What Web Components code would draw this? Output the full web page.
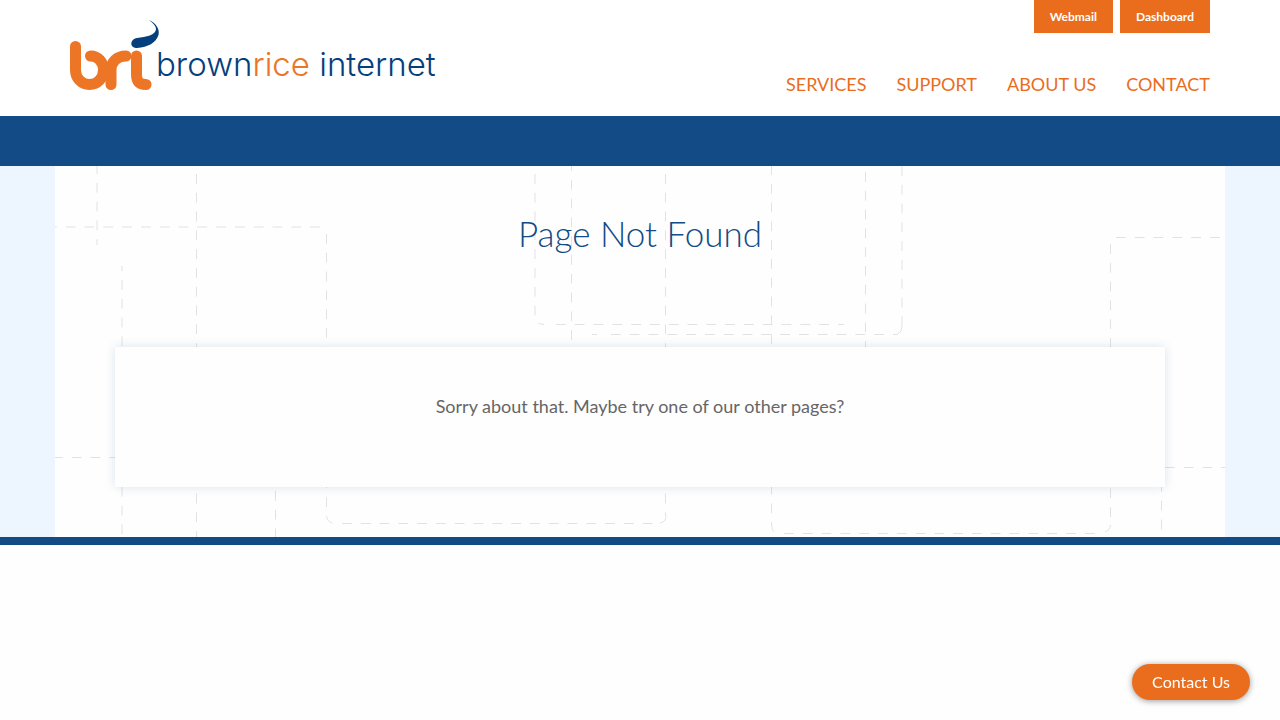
<!DOCTYPE html>
<html lang="en">
<head>
<meta charset="utf-8">
<meta name="viewport" content="width=device-width, initial-scale=1">
<title>Page Not Found - Brownrice Internet</title>
<style>
  :root {
    --orange: #ea6d1e;
    --blue: #124b85;
    --pale: #edf5fe;
    --container: 1170px;
    --gutter: 15px;
  }
  body {
    margin: 0;
    background: #fefefe;
    color: #666;
    font: 18px/26px Lato, "Liberation Sans", sans-serif;
  }
</style>
</head>
<body>
<br-header>
  <br-logo slot="logo"></br-logo>
  <br-tab slot="tabs" href="#webmail">Webmail</br-tab>
  <br-tab slot="tabs" href="#dashboard">Dashboard</br-tab>
  <br-nav-link slot="nav" href="#services">Services</br-nav-link>
  <br-nav-link slot="nav" href="#support">Support</br-nav-link>
  <br-nav-link slot="nav" href="#about">About Us</br-nav-link>
  <br-nav-link slot="nav" href="#contact">Contact</br-nav-link>
</br-header>
<br-banner></br-banner>
<br-page heading="Page Not Found">
  <br-card>Sorry about that. Maybe try one of our other pages?</br-card>
</br-page>
<br-chat-button>Contact Us</br-chat-button>

<script>
  class Base extends HTMLElement {
    constructor() {
      super();
      this.attachShadow({ mode: 'open' });
    }
    connectedCallback() {
      this.shadowRoot.innerHTML = this.render();
    }
  }

  customElements.define('br-logo', class extends Base {
    render() {
      return `
        <style>
          :host { display: block; }
          a, svg { display: block; }
          text { font: 300 33px Inter, "Liberation Sans", sans-serif; fill: #053f7c; }
          .accent { fill: #ec7526; }
        </style>
        <a href="#home" aria-label="Brownrice Internet">
          <svg width="372" height="70" viewBox="0 0 372 70">
            <g fill="none" stroke="#ec7526" stroke-width="11" stroke-linecap="round" stroke-linejoin="round">
              <path d="M5.5 26.500V50C5.500 58 11.500 64.500 19.500 64.500C27.500 64.500 33.500 58 33.500 50C33.500 42 28 36 20.500 36"/>
              <path d="M41 64.500V50C41 42 47 36 56 36"/>
              <path d="M66.500 36V54C66.500 61 69 64.500 76 64.500"/>
            </g>
            <path fill="#053f7c" d="M79 0C86 3 90 9 88.500 15C86 23 78 27 67 28C59 28 60 19 67 18C76 17 86 15 86 9C86 6 83 3 79 0Z"/>
            <text x="86" y="56">brown<tspan class="accent">rice</tspan> internet</text>
          </svg>
        </a>`;
    }
  });

  customElements.define('br-tab', class extends Base {
    render() {
      return `
        <style>
          :host { display: block; }
          a {
            display: block; padding: 0 16px; background: var(--orange); color: #fff;
            font-size: 12px; font-weight: 700; line-height: 33px; text-decoration: none;
          }
        </style>
        <a href="${this.getAttribute('href')}"><slot></slot></a>`;
    }
  });

  customElements.define('br-nav-link', class extends Base {
    render() {
      return `
        <style>
          :host { display: block; }
          a {
            display: block; color: var(--orange); font-size: 18px; line-height: 26px;
            text-decoration: none; text-transform: uppercase;
          }
        </style>
        <a href="${this.getAttribute('href')}"><slot></slot></a>`;
    }
  });

  customElements.define('br-header', class extends Base {
    render() {
      return `
        <style>
          :host { display: block; background: #fff; }
          header {
            display: flex; justify-content: space-between; box-sizing: border-box;
            max-width: var(--container); margin: 0 auto; padding: 0 var(--gutter);
          }
          .logo { padding: 20px 0 26px; }
          .side { display: flex; flex-direction: column; justify-content: space-between; align-items: flex-end; padding-bottom: 19px; }
          .tabs { display: flex; gap: 7px; }
          nav { display: flex; gap: 30px; }
        </style>
        <header>
          <div class="logo"><slot name="logo"></slot></div>
          <div class="side">
            <div class="tabs"><slot name="tabs"></slot></div>
            <nav aria-label="Main"><slot name="nav"></slot></nav>
          </div>
        </header>`;
    }
  });

  customElements.define('br-banner', class extends Base {
    render() {
      return `<style>:host { display: block; height: 50px; background: var(--blue); }</style>`;
    }
  });

  /* Dashed circuit lines behind the page content. */
  customElements.define('br-circuit', class extends Base {
    render() {
      const lines = [
        'M42 -2V79',
        'M141.500 8V371',
        'M67 100V105M67 114V371',
        'M-8 61H266',
        'M271.500 68V348Q271.500 357 280 357.500',
        'M287 357.500H600M605 357Q611 356 611 350',
        'M610.500 8V350',
        'M480 8V151Q480 158 489 158.500',
        'M501 158.500H789',
        'M516.500 -5V176',
        'M716.500 -1V357Q716.500 365 720 366',
        'M729 367.500H1044M1050 366Q1055 364 1055.500 359',
        'M810.500 6V182',
        'M847 0V160',
        'M847 160Q847 166 843 168',
        'M537 168.500H542M556 168.500H843',
        'M1061 71.500H1165',
        'M1055.500 78V354',
        'M1110 301.500H1171',
        'M1106.500 316V371',
        'M-2 291.500H61',
        'M220.500 325V371'
      ];
      return `
        <style>
          :host { display: block; }
          svg { display: block; width: 100%; height: 100%; }
        </style>
        <svg aria-hidden="true" fill="none" stroke="#e2e2e2" stroke-dasharray="9.8 9">
          ${lines.map(d => `<path d="${d}"/>`).join('')}
        </svg>`;
    }
  });

  customElements.define('br-page', class extends Base {
    render() {
      return `
        <style>
          :host { display: block; background: var(--pale); border-bottom: 8px solid var(--blue); }
          main {
            position: relative; box-sizing: border-box; max-width: var(--container);
            margin: 0 auto; padding: 43px 60px 50px; background: #fefefe;
          }
          br-circuit { position: absolute; inset: 0; }
          .content { position: relative; }
          h1 {
            margin: 0 0 90px; color: var(--blue); font-size: 35px; font-weight: 300;
            line-height: 48px; text-align: center;
          }
        </style>
        <main>
          <br-circuit></br-circuit>
          <div class="content">
            <h1>${this.getAttribute('heading')}</h1>
            <slot></slot>
          </div>
        </main>`;
    }
  });

  customElements.define('br-card', class extends Base {
    render() {
      return `
        <style>
          :host {
            display: block; padding: 46px 50px 68px; background: #fefefe;
            box-shadow: 0 0 10px rgba(18, 75, 133, .15); text-align: center;
          }
          p { margin: 0; }
        </style>
        <p><slot></slot></p>`;
    }
  });

  customElements.define('br-chat-button', class extends Base {
    render() {
      return `
        <style>
          :host { display: block; position: fixed; right: 30px; bottom: 20px; }
          button {
            display: block; height: 36px; padding: 0 20px; border: 0; border-radius: 18px;
            background: var(--orange); color: #fff; font: 16px/36px Lato, "Liberation Sans", sans-serif;
            box-shadow: 0 1px 6px rgba(0, 0, 0, .4); cursor: pointer;
          }
        </style>
        <button type="button"><slot></slot></button>`;
    }
  });
</script>
</body>
</html>
